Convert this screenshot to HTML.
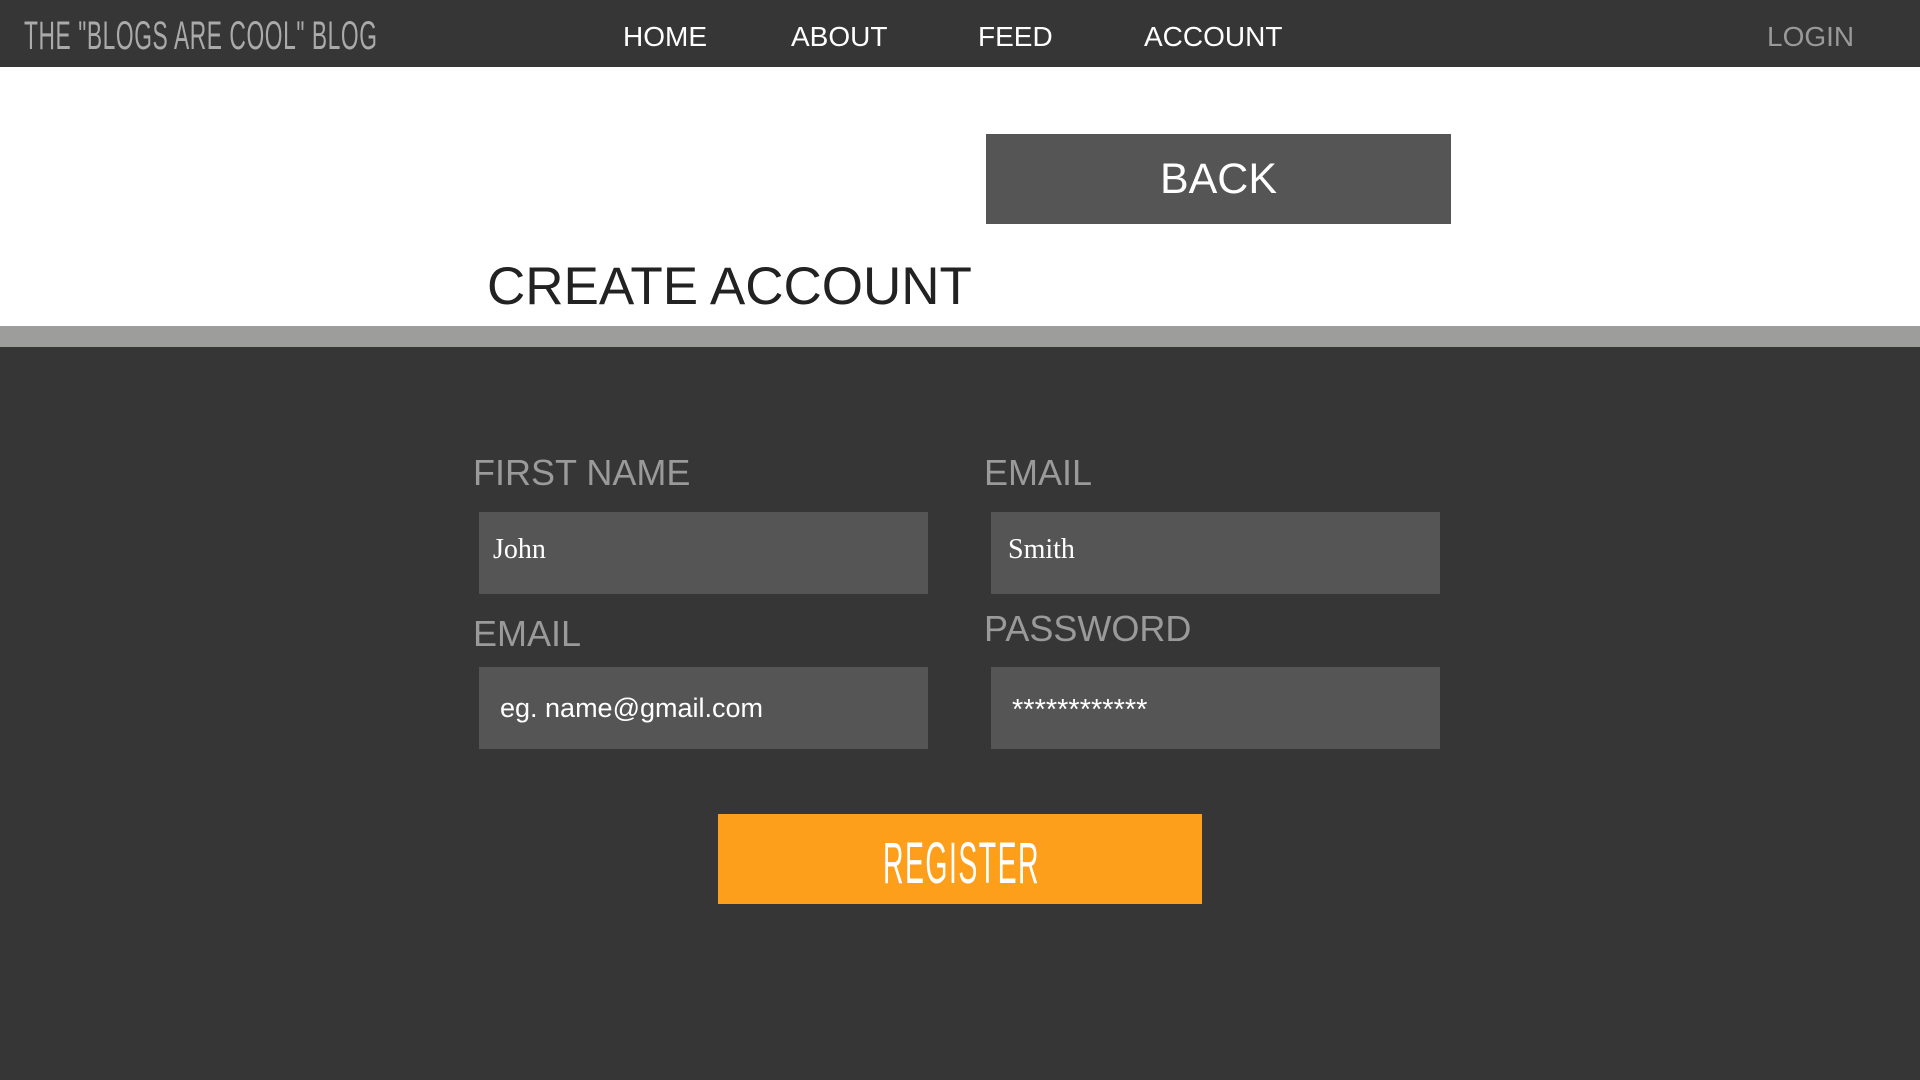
<!DOCTYPE html>
<html><head><meta charset="utf-8"><style>
*{margin:0;padding:0;box-sizing:border-box}
body{width:1920px;height:1080px;background:#363636;font-family:"Liberation Sans",sans-serif;position:relative;overflow:hidden}
.a{position:absolute;white-space:nowrap}
.nav{left:0;top:0;width:1920px;height:67px;background:#363636}
.nl{color:#fff;font-size:28px;top:21px}
.cond{font-family:"Liberation Sans Narrow","Liberation Sans",sans-serif;transform-origin:left top}
.white{left:0;top:67px;width:1920px;height:259px;background:#fff}
.bar{left:0;top:326px;width:1920px;height:21px;background:#9d9d9b}
.lbl{color:#9a9a9a;font-size:36px;font-weight:300}
.inp{background:#555;width:449px;height:82px}
.it{color:#fff;font-size:28px;top:22px;left:14px}
</style></head><body>
<div class="a nav"></div>
<div class="a cond" style="left:24px;top:14px;font-size:40px;color:#aaa;transform:scaleX(0.57);letter-spacing:1px">THE "BLOGS ARE COOL" BLOG</div>
<div class="a nl" style="left:623px">HOME</div>
<div class="a nl" style="left:791px">ABOUT</div>
<div class="a nl" style="left:978px">FEED</div>
<div class="a nl" style="left:1144px">ACCOUNT</div>
<div class="a nl" style="left:1767px;color:#999">LOGIN</div>
<div class="a white"></div>
<div class="a" style="left:986px;top:134px;width:465px;height:90px;background:#555;color:#fff;font-size:43px;text-align:center;line-height:90px">BACK</div>
<div class="a" style="left:487px;top:256px;font-size:53px;color:#222">CREATE ACCOUNT</div>
<div class="a bar"></div>
<div class="a lbl" style="left:473px;top:452px">FIRST NAME</div>
<div class="a lbl" style="left:984px;top:452px">EMAIL</div>
<div class="a inp" style="left:479px;top:512px"><div class="a it" style="font-family:'Liberation Serif',serif">John</div></div>
<div class="a inp" style="left:991px;top:512px"><div class="a it" style="font-family:'Liberation Serif',serif;left:17px">Smith</div></div>
<div class="a lbl" style="left:473px;top:613px">EMAIL</div>
<div class="a lbl" style="left:984px;top:608px">PASSWORD</div>
<div class="a inp" style="left:479px;top:667px"><div class="a it" style="left:21px;font-size:27px;top:26px;font-weight:300">eg. name@gmail.com</div></div>
<div class="a inp" style="left:991px;top:667px"><div class="a it" style="left:21px;font-size:29px;top:27px">************</div></div>
<div class="a" style="left:718px;top:814px;width:484px;height:90px;background:#fd9f1a"></div>
<div class="a cond" style="left:883px;top:830px;font-size:58px;color:#fff;transform:scaleX(0.49);letter-spacing:3px">REGISTER</div>
</body></html>
